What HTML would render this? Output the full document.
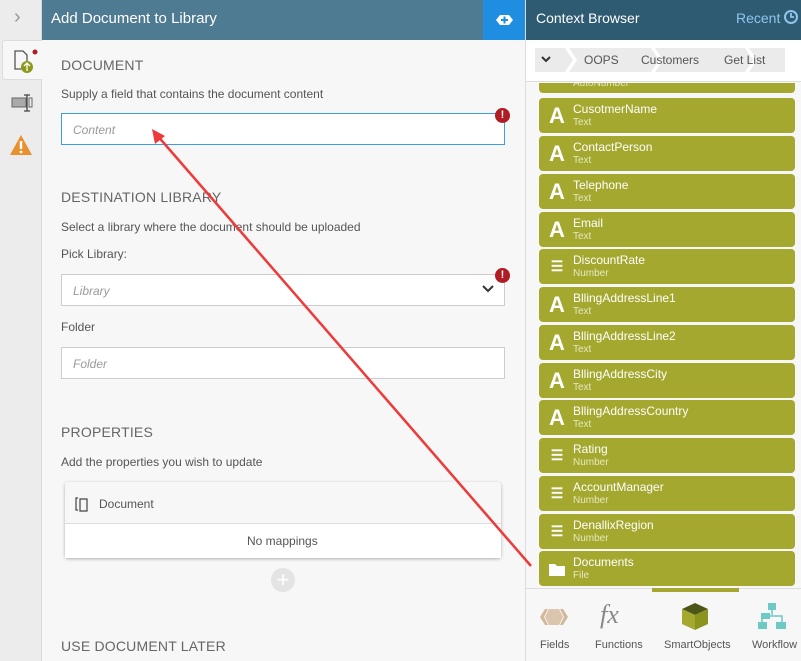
<!DOCTYPE html>
<html><head><style>
*{box-sizing:border-box;margin:0;padding:0}
body{width:801px;height:661px;overflow:hidden;font-family:"Liberation Sans",sans-serif;background:#f7f7f7;position:relative;font-size:12px;color:#555}
.abs{position:absolute}
.lbl{color:#666;font-size:14px;letter-spacing:.2px}
.sm{color:#555;font-size:12px}
.inp{position:absolute;left:61px;width:444px;height:32px;background:#fff;border:1px solid #ccc;font-style:italic;color:#999;font-size:12px;padding:9px 11px}
.err{position:absolute;width:15px;height:15px;border-radius:50%;background:#b01b24;color:#fff;font-weight:bold;font-size:11px;text-align:center;line-height:15px}
.it{position:absolute;left:539px;width:256px;height:35px;background:#a4a82e;border-radius:4px;color:#fff}
.it .ic{position:absolute;left:9px;top:5px;font-size:22px;font-weight:bold;width:18px;text-align:center}
.it .n{position:absolute;left:34px;top:4px;font-size:12px}
.it .t{position:absolute;left:34px;top:19px;font-size:10px;color:#e6e8c0}
</style></head><body>
<!-- left strip -->
<div class="abs" style="left:0;top:0;width:42px;height:661px;background:#ececec;border-right:1px solid #d8d8d8"></div>
<div class="abs" style="left:14px;top:6px;font-size:20px;color:#999">&#x203A;</div>
<div class="abs" style="left:2px;top:40px;width:40px;height:40px;background:#f7f7f7;border:1px solid #ddd;border-right:none;border-radius:3px 0 0 3px"></div>
<svg class="abs" style="left:12px;top:48px" width="26" height="28"><path d="M3 3h8l4 4v14H3z" fill="none" stroke="#555" stroke-width="1.3"/><circle cx="15" cy="19" r="6" fill="#8c9a1c"/><path d="M15 23v-7M12 18l3-3 3 3" stroke="#fff" stroke-width="1.3" fill="none"/><circle cx="23" cy="4" r="2.5" fill="#b01b24"/></svg>
<svg class="abs" style="left:10px;top:92px" width="24" height="22"><rect x="2" y="6" width="14" height="9" fill="#aaa" stroke="#666"/><path d="M17 3v16M14 3h6M14 19h6" stroke="#444" stroke-width="1.3"/><rect x="19" y="6" width="3" height="9" fill="none" stroke="#666"/></svg>
<svg class="abs" style="left:9px;top:133px" width="24" height="24"><path d="M12 2L23 22H1z" fill="#e8912e"/><path d="M12 8v8" stroke="#fff" stroke-width="2.5"/><circle cx="12" cy="19" r="1.4" fill="#fff"/></svg>
<!-- main header -->
<div class="abs" style="left:42px;top:0;width:441px;height:40px;background:#4e7a92;color:#fff;font-size:15px;padding:10px 0 0 9px">Add Document to Library</div>
<div class="abs" style="left:483px;top:0;width:43px;height:40px;background:#1f8de0"><svg width="43" height="40"><path d="M13 20l4-5h9l4 5-4 5h-9z" fill="#fff"/><path d="M21.5 16.5v7M18 20h7" stroke="#1f8de0" stroke-width="2"/></svg></div>
<div class="abs" style="left:525px;top:0;width:1px;height:661px;background:#ddd"></div>
<!-- main content -->
<div class="abs lbl" style="left:61px;top:57px">DOCUMENT</div>
<div class="abs sm" style="left:61px;top:87px">Supply a field that contains the document content</div>
<div class="inp" style="top:113px;border:1px solid #3d9be9">Content</div>
<div class="err" style="left:495px;top:108px">!</div>
<div class="abs lbl" style="left:61px;top:189px">DESTINATION LIBRARY</div>
<div class="abs sm" style="left:61px;top:220px">Select a library where the document should be uploaded</div>
<div class="abs sm" style="left:61px;top:247px">Pick Library:</div>
<div class="inp" style="top:274px">Library</div>
<svg class="abs" style="left:481px;top:284px" width="14" height="10"><path d="M2 2l5 5 5-5" stroke="#333" stroke-width="2" fill="none"/></svg>
<div class="err" style="left:495px;top:268px">!</div>
<div class="abs sm" style="left:61px;top:320px">Folder</div>
<div class="inp" style="top:347px">Folder</div>
<div class="abs lbl" style="left:61px;top:424px">PROPERTIES</div>
<div class="abs sm" style="left:61px;top:455px">Add the properties you wish to update</div>
<div class="abs" style="left:65px;top:482px;width:436px;height:76px;background:#f7f7f7;box-shadow:0 1px 3px rgba(0,0,0,.3);border-radius:3px"></div>
<div class="abs" style="left:65px;top:523px;width:436px;height:35px;background:#fff;border-top:1px solid #ddd"></div>
<svg class="abs" style="left:74px;top:495px" width="18" height="18"><path d="M4 3h-2v12h2M6 4h7v12H6z" fill="none" stroke="#444" stroke-width="1.2"/></svg>
<div class="abs sm" style="left:99px;top:497px">Document</div>
<div class="abs sm" style="left:247px;top:534px">No mappings</div>
<div class="abs" style="left:271px;top:568px;width:24px;height:24px;border-radius:50%;background:#e4e4e4;color:#fff;font-size:22px;text-align:center;line-height:23px">+</div>
<div class="abs lbl" style="left:61px;top:638px">USE DOCUMENT LATER</div>
<!-- right panel -->
<div class="abs" style="left:526px;top:0;width:275px;height:40px;background:#2e5a72;color:#fff;font-size:14px;padding:10px 0 0 10px">Context Browser</div>
<div class="abs" style="left:736px;top:10px;color:#8fc5ec;font-size:14px">Recent</div>
<svg class="abs" style="left:783px;top:9px" width="16" height="16"><circle cx="8" cy="8" r="6" fill="none" stroke="#8fc5ec" stroke-width="2"/><path d="M8 4v4h3" stroke="#8fc5ec" stroke-width="1.8" fill="none"/></svg>
<div class="abs" style="left:526px;top:40px;width:275px;height:42px;background:#fff;border-bottom:1px solid #ddd"></div>
<svg class="abs" style="left:535px;top:48px" width="250" height="24"><path d="M0 0h30l8 12-8 12H0z M34 0h82l8 12-8 12H34l8-12z M120 0h90l8 12-8 12h-90l8-12z M214 0h36l8 12-8 12h-36l8-12z" fill="#ebebeb"/><path d="M7 9l4 4 4-4" stroke="#333" stroke-width="2" fill="none"/></svg>
<div class="abs" style="left:584px;top:53px;color:#555;font-size:12px">OOPS</div>
<div class="abs" style="left:641px;top:53px;color:#555;font-size:12px">Customers</div>
<div class="abs" style="left:724px;top:53px;color:#555;font-size:12px">Get List</div>
<div class="abs" style="left:526px;top:83px;width:275px;height:505px;background:#f7f7f7;overflow:hidden">
<div class="it" style="top:-25px;left:13px"><div class="t" style="top:20px">AutoNumber</div></div>
</div>
<div class="it" style="top:98px"><div class="ic">A</div><div class="n">CusotmerName</div><div class="t">Text</div></div>
<div class="it" style="top:136px"><div class="ic">A</div><div class="n">ContactPerson</div><div class="t">Text</div></div>
<div class="it" style="top:174px"><div class="ic">A</div><div class="n">Telephone</div><div class="t">Text</div></div>
<div class="it" style="top:212px"><div class="ic">A</div><div class="n">Email</div><div class="t">Text</div></div>
<div class="it" style="top:249px"><div class="ic" style="font-size:14px;top:9px">&#x2630;</div><div class="n">DiscountRate</div><div class="t">Number</div></div>
<div class="it" style="top:287px"><div class="ic">A</div><div class="n">BllingAddressLine1</div><div class="t">Text</div></div>
<div class="it" style="top:325px"><div class="ic">A</div><div class="n">BllingAddressLine2</div><div class="t">Text</div></div>
<div class="it" style="top:363px"><div class="ic">A</div><div class="n">BllingAddressCity</div><div class="t">Text</div></div>
<div class="it" style="top:400px"><div class="ic">A</div><div class="n">BllingAddressCountry</div><div class="t">Text</div></div>
<div class="it" style="top:438px"><div class="ic" style="font-size:14px;top:9px">&#x2630;</div><div class="n">Rating</div><div class="t">Number</div></div>
<div class="it" style="top:476px"><div class="ic" style="font-size:14px;top:9px">&#x2630;</div><div class="n">AccountManager</div><div class="t">Number</div></div>
<div class="it" style="top:514px"><div class="ic" style="font-size:14px;top:9px">&#x2630;</div><div class="n">DenallixRegion</div><div class="t">Number</div></div>
<div class="it" style="top:551px"><svg class="abs" style="left:10px;top:11px" width="16" height="14"><path d="M0 2h6l2 2h8v10H0z" fill="#fff"/></svg><div class="n">Documents</div><div class="t">File</div></div>
<div class="abs" style="left:526px;top:588px;width:275px;height:73px;background:#f7f7f7;border-top:1px solid #ddd"></div>
<div class="abs" style="left:652px;top:588px;width:87px;height:4px;background:#a4a82e"></div>
<svg class="abs" style="left:538px;top:606px" width="32" height="22"><path d="M2 11l5-8h3l-4 8 4 8H7z M30 11l-5-8h-3l4 8-4 8h3z" fill="#d4b89a"/><path d="M11 3h10l4 8-4 8H11l-4-8z" fill="#d4b89a" opacity=".8"/></svg>
<div class="abs" style="left:600px;top:600px;font-family:'Liberation Serif',serif;font-style:italic;font-size:26px;color:#888">fx</div>
<svg class="abs" style="left:680px;top:601px" width="30" height="30"><path d="M15 2l13 6-13 6-13-6z" fill="#4c5618"/><path d="M2 8l13 6v15L2 23z" fill="#a4a82e"/><path d="M28 8l-13 6v15l13-6z" fill="#8c9420"/></svg>
<svg class="abs" style="left:757px;top:602px" width="30" height="28"><rect x="11" y="1" width="8" height="7" fill="#6cc9c5"/><rect x="1" y="20" width="9" height="7" fill="#6cc9c5"/><rect x="19" y="20" width="10" height="7" fill="#6cc9c5"/><rect x="4" y="11" width="9" height="6" fill="#6cc9c5"/><path d="M15 8v5M5 14h20v6M5 14v6" stroke="#6cc9c5" stroke-width="1.5" fill="none"/></svg>
<div class="abs" style="left:540px;top:639px;font-size:11px;color:#555">Fields</div>
<div class="abs" style="left:595px;top:639px;font-size:11px;color:#555">Functions</div>
<div class="abs" style="left:664px;top:639px;font-size:11px;color:#555">SmartObjects</div>
<div class="abs" style="left:752px;top:639px;font-size:11px;color:#555">Workflow</div>
<!-- red arrow -->
<svg class="abs" style="left:0;top:0" width="801" height="661"><path d="M531 566L156 134" stroke="#ee3a3a" stroke-width="2.5"/><path d="M152 129l3 15 10-8z" fill="#ee3a3a"/></svg>
</body></html>
